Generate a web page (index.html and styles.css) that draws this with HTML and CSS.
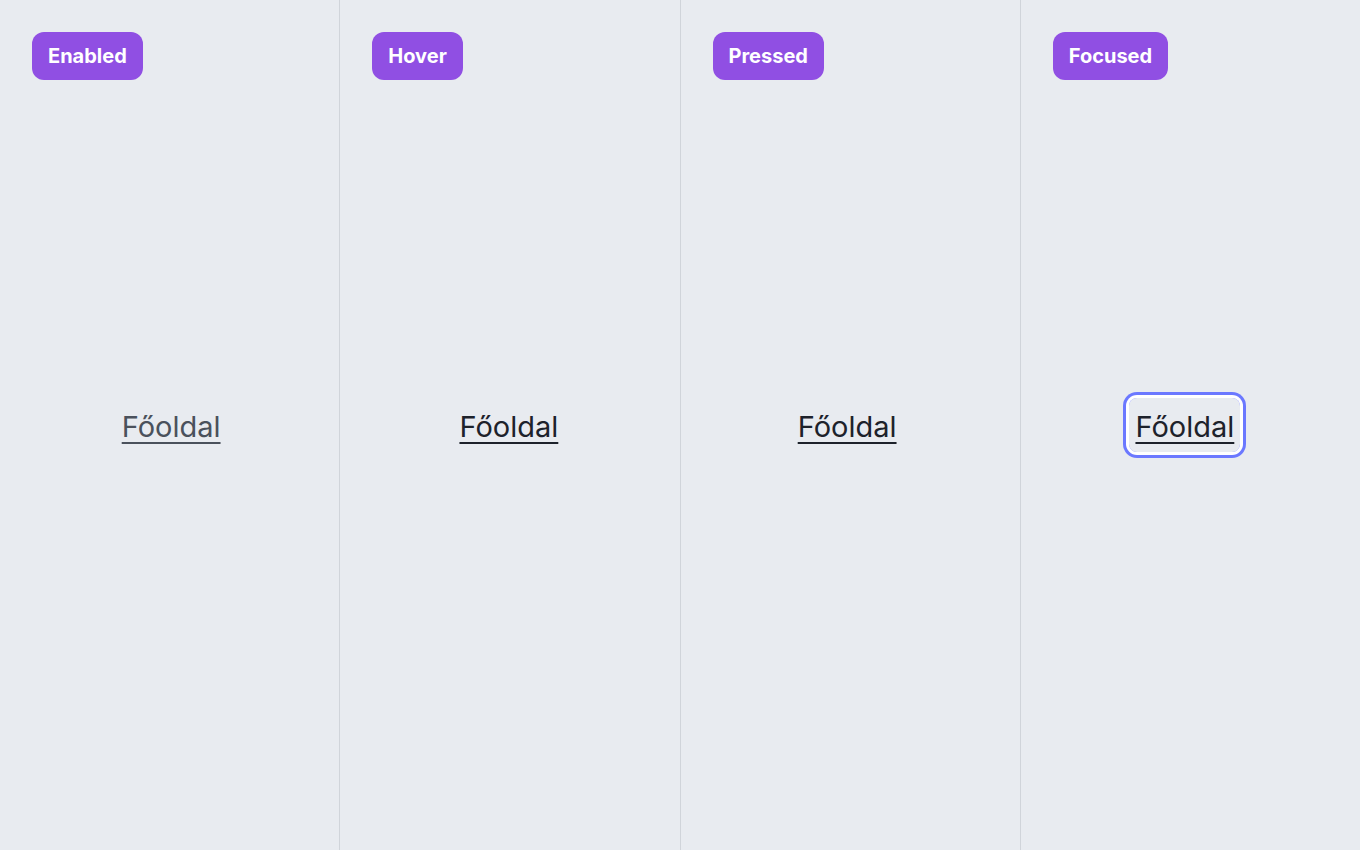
FILE: index.html
```html
<!DOCTYPE html>
<html lang="hu">
<head>
<meta charset="utf-8">
<link rel="stylesheet" href="styles.css">
</head>
<body>
<main class="grid">
  <section class="cell">
    <span class="badge">Enabled</span>
    <a class="link" href="#">Főoldal</a>
  </section>
  <section class="cell">
    <span class="badge">Hover</span>
    <a class="link hover" href="#">Főoldal</a>
  </section>
  <section class="cell">
    <span class="badge">Pressed</span>
    <a class="link pressed" href="#">Főoldal</a>
  </section>
  <section class="cell">
    <span class="badge">Focused</span>
    <a class="link focused" href="#">Főoldal</a>
  </section>
</main>
</body>
</html>
```
FILE: styles.css
```css
html, body {
  margin: 0;
  padding: 0;
  background: #e8ebf0;
  font-family: Inter, "Noto Sans", sans-serif;
}
.grid {
  display: grid;
  grid-template-columns: repeat(4, 1fr);
  column-gap: 1px;
  background: #d0d4da;
  height: 850px;
}
.cell {
  position: relative;
  display: flex;
  align-items: center;
  justify-content: center;
  background: #e8ebf0;
}
.badge {
  position: absolute;
  top: 32px;
  left: 32px;
  height: 47px;
  line-height: 47px;
  padding: 1px 16px 0;
  border-radius: 12px;
  background: #904fe3;
  color: #ffffff;
  font-weight: 700;
  font-size: 20px;
}
.link {
  display: inline-block;
  font-size: 29px;
  color: #4a515c;
  text-decoration: underline;
  text-decoration-thickness: 2px;
  text-underline-offset: 5px;
  padding: 8px 6px 4px;
  border-radius: 8px;
  line-height: 42px;
}
.cell:nth-child(1) .link { margin-left: 3px; }
.cell:nth-child(2) .link { margin-right: 2px; }
.cell:nth-child(3) .link { margin-right: 6px; }
.cell:nth-child(4) .link { margin-right: 11px; }
.hover, .pressed {
  color: #1d222b;
}
.focused {
  color: #1d222b;
  box-shadow: 0 0 0 3px #ffffff, 0 0 0 6px #6b78ff;
}
```
